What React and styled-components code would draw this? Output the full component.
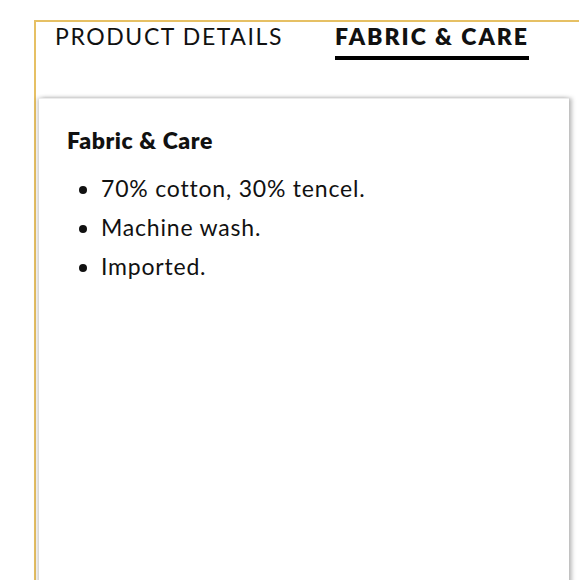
import React from 'react';
import styled, { createGlobalStyle } from 'styled-components';

const GlobalStyle = createGlobalStyle`
  html, body {
    margin: 0;
    padding: 0;
    background: #ffffff;
    overflow: hidden;
  }
  body {
    font-family: Lato, "Open Sans", sans-serif;
    color: #111111;
  }
`;

const tabs = [
  { label: 'PRODUCT DETAILS', active: false },
  { label: 'FABRIC & CARE', active: true },
];

const items = ['70% cotton, 30% tencel.', 'Machine wash.', 'Imported.'];

export default function App() {
  return (
    <Page>
      <GlobalStyle />
      <Frame>
        <TabRow>
          {tabs.map((t) => (
            <Tab key={t.label} $active={t.active}>
              {t.label}
            </Tab>
          ))}
        </TabRow>
        <Card>
          <Heading>Fabric &amp; Care</Heading>
          <List>
            {items.map((item) => (
              <Item key={item}>{item}</Item>
            ))}
          </List>
        </Card>
      </Frame>
    </Page>
  );
}

// styled

const Page = styled.div`
  width: 579px;
  height: 580px;
  padding: 20px 0 0 34px;
  box-sizing: border-box;
  overflow: hidden;
`;

const Frame = styled.div`
  border-top: 2px solid #e6c064;
  border-left: 2px solid #e6c064;
  width: 600px;
  height: 600px;
  box-sizing: border-box;
`;

const TabRow = styled.div`
  display: flex;
  gap: 52px;
  padding: 1px 0 0 19px;
  height: 76px;
  box-sizing: border-box;
`;

const Tab = styled.div`
  font-size: 23px;
  line-height: 26px;
  letter-spacing: ${(p) => (p.$active ? '2px' : '1.6px')};
  font-weight: ${(p) => (p.$active ? 800 : 400)};
  color: #111;
  align-self: flex-start;
  padding-bottom: 7px;
  border-bottom: 4px solid ${(p) => (p.$active ? '#000' : 'transparent')};
`;

const Card = styled.div`
  margin-left: 3px;
  width: 530px;
  height: 520px;
  background: #fff;
  border-top: 1px solid #ececec;
  box-shadow: 3px 0 4px rgba(0, 0, 0, 0.25), -2px 0 4px rgba(0, 0, 0, 0.18);
  padding: 26px 0 0 28px;
  box-sizing: border-box;
`;

const Heading = styled.h2`
  margin: 0 0 14px;
  font-size: 23px;
  line-height: 30px;
  letter-spacing: 0.6px;
  font-weight: 800;
  color: #111;
`;

const List = styled.ul`
  margin: 0;
  padding-left: 34px;
`;

const Item = styled.li`
  font-size: 23px;
  line-height: 39px;
  letter-spacing: 0.8px;
  color: #111;
  padding-left: 0;
`;
